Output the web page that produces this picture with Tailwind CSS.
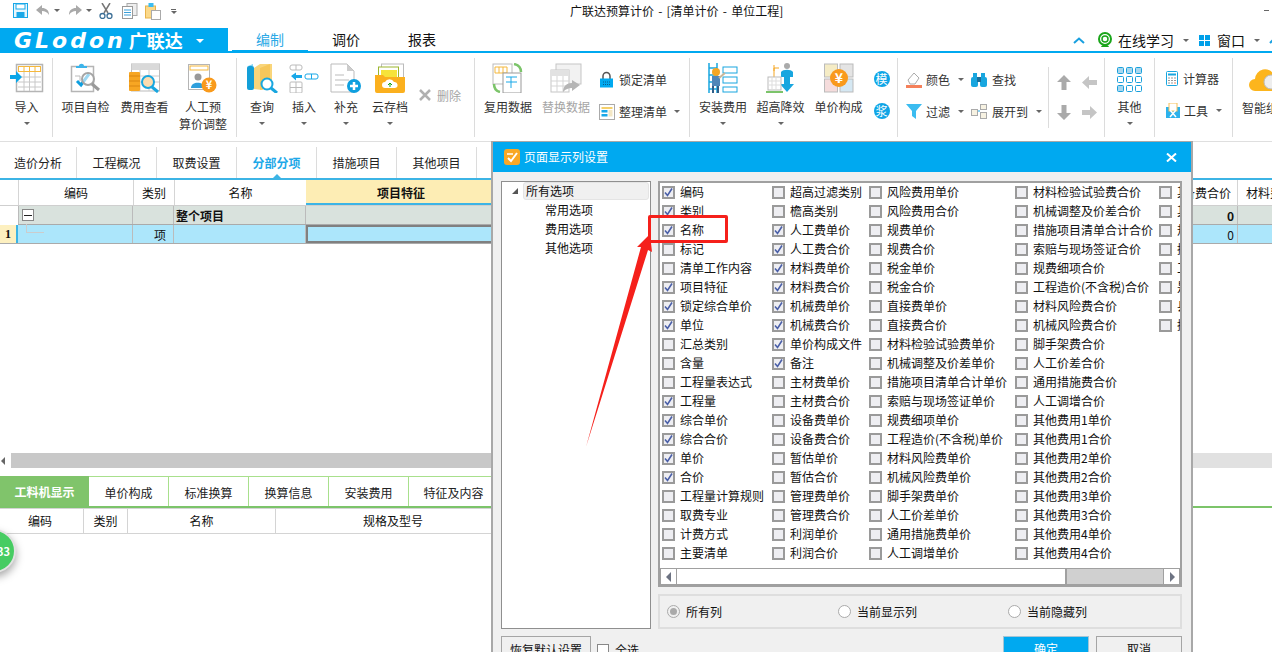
<!DOCTYPE html>
<html lang="zh-CN">
<head>
<meta charset="UTF-8">
<title>广联达预算计价</title>
<script src="https://cdn.jsdelivr.net/npm/@tailwindcss/browser@4"></script>
</head>
<body class="bg-white">
<div class="relative w-[1272px] h-[652px] overflow-hidden bg-white flex flex-col text-[12px] text-[#222] font-['Noto_Sans_CJK_SC','Noto_Sans',sans-serif]">

  <!-- title bar -->
  <div class="h-[28px] flex shrink-0">
    <div class="w-[570px] flex items-start pt-[3px] pl-[13px] gap-[5px]">
      <svg width="15" height="15" viewBox="0 0 15 15"><rect x=".5" y=".5" width="14" height="14" fill="#e6f6fd" stroke="#19a8e8"/><rect x="3" y="1" width="9" height="5" fill="#fff" stroke="#19a8e8"/><rect x="3.5" y="9" width="8" height="5" fill="#19a8e8"/></svg>
      <svg class="ml-[2px]" width="15" height="15" viewBox="0 0 15 15"><path d="M1 7l6-5v3c4 0 7 2 7 7-2-3-4-4-7-4v4z" fill="#a9a9a9"/></svg>
      <div class="mt-[6px] -ml-[1px] w-0 h-0 border-x-[3px] border-t-[3px] border-x-transparent border-t-[#666]"></div>
      <svg class="ml-[3px]" width="15" height="15" viewBox="0 0 15 15"><path d="M14 7L8 2v3C4 5 1 7 1 12c2-3 4-4 7-4v4z" fill="#a9a9a9"/></svg>
      <div class="mt-[6px] -ml-[2px] w-0 h-0 border-x-[3px] border-t-[3px] border-x-transparent border-t-[#666]"></div>
      <svg class="ml-[2px]" width="14" height="16" viewBox="0 0 14 16"><path d="M3 0l6 10M11 0L5 10" stroke="#777" stroke-width="1.5"/><circle cx="3.5" cy="13" r="2.5" fill="none" stroke="#3c6f96" stroke-width="1.3"/><circle cx="10.5" cy="13" r="2.5" fill="none" stroke="#3c6f96" stroke-width="1.3"/></svg>
      <svg class="ml-[4px]" width="16" height="16" viewBox="0 0 16 16"><rect x="5" y=".5" width="10" height="12" fill="#eee" stroke="#aaa"/><rect x=".5" y="3.5" width="10" height="12" fill="#fff" stroke="#999"/><path d="M2 7h7M2 9.500h7M2 12h7" stroke="#3a9fd8"/></svg>
      <svg class="ml-[2px]" width="16" height="17" viewBox="0 0 16 17"><rect x=".5" y="3" width="10" height="12" fill="#fbd98a" stroke="#e8b34b"/><rect x="3.500" y="0" width="5" height="4" fill="#3cbcf0"/><rect x="6.500" y="7.500" width="9" height="9" fill="#fff" stroke="#aaa"/></svg>
      <div class="mt-[6px] ml-[5px] flex flex-col gap-[1px]"><div class="w-[5px] h-[1px] bg-[#666]"></div><div class="w-0 h-0 border-x-[3px] border-t-[3px] border-x-transparent border-t-[#666]"></div></div>
    </div>
    <div class="pt-[2px] leading-[18px] text-[#111] [word-spacing:1.5px]">广联达预算计价 - [清单计价 - 单位工程]</div>
    <div class="ml-auto mr-[3px] mt-[10px] w-[5px] h-[1px] bg-[#666]"></div>
  </div>

  <!-- menu row -->
  <div class="h-[25px] flex shrink-0 border-b-2 border-[#00a9f0]">
    <div class="w-[228px] h-[25px] bg-[#00a9f0] flex items-center pl-[14px] text-white">
      <span class="font-['DejaVu_Sans'] font-bold italic text-[22px] tracking-[3px] leading-[25px]">GLodon</span>
      <span class="ml-[3px] font-bold text-[18px] leading-[25px]">广联达</span>
      <div class="ml-[13px] w-0 h-0 border-x-[4px] border-t-[4px] border-x-transparent border-t-white"></div>
    </div>
    <div class="ml-[4px] w-[76px] h-[25px] text-center text-[14px] leading-[22px] text-[#2ba9e6] border-b-[3px] border-[#00a9f0]">编制</div>
    <div class="w-[76px] text-center text-[14px] leading-[22px] text-[#111]">调价</div>
    <div class="w-[76px] text-center text-[14px] leading-[22px] text-[#111]">报表</div>
    <div class="ml-auto flex items-center h-[23px] pt-[1px] text-[14px] text-[#111]">
      <svg width="12" height="7" viewBox="0 0 12 7"><path d="M1 6l5-4.500L11 6" fill="none" stroke="#19a0e0" stroke-width="2"/></svg>
      <svg class="ml-[12px]" width="16" height="16" viewBox="0 0 16 16"><circle cx="8" cy="7" r="6" fill="none" stroke="#1aa51a" stroke-width="2"/><circle cx="8" cy="7" r="3" fill="none" stroke="#1aa51a" stroke-width="1.500"/><path d="M4 15c1-3 7-3 8 0z" fill="#1aa51a"/></svg>
      <span class="ml-[5px] leading-[18px]">在线学习</span>
      <div class="ml-[9px] w-0 h-0 border-x-[3px] border-t-[3px] border-x-transparent border-t-[#666]"></div>
      <div class="ml-[10px] grid grid-cols-2 gap-[1px]"><div class="w-[5px] h-[5px] bg-[#00a0e9]"></div><div class="w-[5px] h-[5px] bg-[#00a0e9]"></div><div class="w-[5px] h-[5px] bg-[#00a0e9]"></div><div class="w-[5px] h-[5px] bg-[#00a0e9]"></div></div>
      <span class="ml-[7px] leading-[18px]">窗口</span>
      <div class="ml-[9px] w-0 h-0 border-x-[3px] border-t-[3px] border-x-transparent border-t-[#666]"></div>
      <svg class="ml-[9px] mr-[-3px]" width="6" height="8" viewBox="0 0 6 8"><path d="M1 7l5-5" stroke="#19a0e0" stroke-width="2"/></svg>
    </div>
  </div>

  <!-- ribbon -->
  <div class="h-[89px] shrink-0 flex border-b border-[#dfdfdf] pt-[5px] text-[#333] leading-[17px]">

    <div class="w-[53px] h-[79px] border-r border-[#dcdcdc] flex flex-col items-center pt-[5px] pl-[1px]">
      <svg width="34" height="30" viewBox="0 0 34 30"><rect x="6.500" y="1.500" width="26" height="27" fill="#fff" stroke="#b5b5b5" stroke-width="1.500"/><rect x="8.500" y="3.500" width="22" height="5" fill="#fff" stroke="#f5b83d"/><path d="M14 4v4M19.500 4v4M25 4v4" stroke="#f5b83d"/><path d="M8 14h23M8 19h23M8 24h23M14 9v19M19.500 9v19M25 9v19" stroke="#c8c8c8"/><path d="M0 12h6V8l6 6-6 6v-4H0z" fill="#0aa6e8"/></svg>
      <span class="mt-[5px]">导入</span>
      <div class="mt-[7px] w-0 h-0 border-x-[3px] border-t-[3px] border-x-transparent border-t-[#666]"></div>
    </div>

    <div class="w-[184px] h-[79px] border-r border-[#dcdcdc] flex pl-[3px]">
      <div class="w-[59px] flex flex-col items-center pt-[5px]">
        <svg width="32" height="30" viewBox="0 0 32 30"><rect x="1.500" y="3.500" width="22" height="25" fill="#fff" stroke="#b5b5b5" stroke-width="1.500"/><path d="M9 3c0-3 5-3 5 0h3v2H6V3z" fill="#3db4ea"/><path d="M5 13h5v5" fill="none" stroke="#bbb"/><path d="M7 18l4 4 8-11" fill="none" stroke="#0e9fdf" stroke-width="3"/><circle cx="18" cy="16" r="6" fill="#fff" fill-opacity=".6" stroke="#a5a5a5" stroke-width="2"/><path d="M22 21l7 6" stroke="#999" stroke-width="3"/></svg>
        <span class="mt-[5px]">项目自检</span>
      </div>
      <div class="w-[59px] flex flex-col items-center pt-[5px]">
        <svg width="32" height="30" viewBox="0 0 32 30"><rect x="2.500" y="1" width="28" height="27" fill="#fff" stroke="#bbb"/><rect x="2.500" y="1" width="28" height="6" fill="#d9d9d9"/><path d="M3 13h27M3 19h27M11 7v21M20 7v21" stroke="#ccc"/><rect x="0" y="9" width="11" height="19" rx="1" fill="#f7a623"/><path d="M0 13h11M0 18h11M0 23h11" stroke="#d98612"/><circle cx="19" cy="19" r="6" fill="#fbdcb0" stroke="#18a6df" stroke-width="2"/><path d="M23 24l6 5" stroke="#18a6df" stroke-width="3"/></svg>
        <span class="mt-[5px]">费用查看</span>
      </div>
      <div class="w-[58px] flex flex-col items-center pt-[5px]">
        <svg width="30" height="30" viewBox="0 0 30 30"><rect x=".500" y="1.500" width="21" height="25" fill="#fff" stroke="#b5b5b5"/><rect x="2" y="3" width="18" height="4" fill="#fff" stroke="#f5b83d"/><circle cx="10" cy="14" r="3.500" fill="#999"/><path d="M3 25c0-7 13-7 14 0z" fill="#2f9fdc"/><circle cx="21" cy="22" r="7.500" fill="#f99a1c"/><text x="21" y="26" text-anchor="middle" fill="#fff" font-size="11" font-weight="700">¥</text></svg>
        <span class="mt-[5px]">人工预</span>
        <span>算价调整</span>
      </div>
    </div>

    <div class="w-[238px] h-[79px] border-r border-[#dcdcdc] flex pl-[4px]">
      <div class="w-[42px] flex flex-col items-center pt-[5px]">
        <svg width="32" height="30" viewBox="0 0 32 30"><rect x="1" y="3" width="7" height="24" rx="2" fill="#139fd8"/><path d="M2 3l5-2v2z" fill="#7fd0f0"/><path d="M8 5l6-4h12v22l-10 4-8-1z" fill="#f9d57a"/><path d="M14 5l10-4v23l-10 3z" fill="#f6c75b"/><circle cx="21" cy="21" r="5.500" fill="#fff" stroke="#18a6df" stroke-width="2"/><path d="M25 25l6 5" stroke="#18a6df" stroke-width="3"/></svg>
        <span class="mt-[5px]">查询</span>
        <div class="mt-[7px] w-0 h-0 border-x-[3px] border-t-[3px] border-x-transparent border-t-[#666]"></div>
      </div>
      <div class="w-[42px] flex flex-col items-center pt-[5px]">
        <svg width="30" height="30" viewBox="0 0 30 30"><rect x="1" y="2" width="12" height="5" rx="2" fill="#fff" stroke="#bbb"/><path d="M7 2v5" stroke="#bbb"/><path d="M2 13l5-3.500V12h6v3H7v2.500z" fill="#19a8e8"/><rect x="16" y="11" width="13" height="5" rx="2" fill="#fff" stroke="#19a8e8"/><path d="M22.500 11v5" stroke="#19a8e8"/><rect x="1" y="19" width="12" height="11" rx="1" fill="#fff" stroke="#bbb"/><path d="M1 24.500h12M7 19v11" stroke="#bbb"/></svg>
        <span class="mt-[5px]">插入</span>
        <div class="mt-[7px] w-0 h-0 border-x-[3px] border-t-[3px] border-x-transparent border-t-[#666]"></div>
      </div>
      <div class="w-[42px] flex flex-col items-center pt-[5px]">
        <svg width="32" height="30" viewBox="0 0 32 30"><path d="M1 1h16l7 7v21H1z" fill="#fff" stroke="#bbb"/><path d="M17 1v7h7z" fill="#ccc"/><path d="M5 12h9M5 17h14M5 22h9" stroke="#ddd" stroke-width="2"/><circle cx="24" cy="23" r="7" fill="#0e9fdf"/><path d="M24 19v8M20 23h8" stroke="#fff" stroke-width="2.500"/></svg>
        <span class="mt-[5px]">补充</span>
        <div class="mt-[7px] w-0 h-0 border-x-[3px] border-t-[3px] border-x-transparent border-t-[#666]"></div>
      </div>
      <div class="w-[46px] flex flex-col items-center pt-[5px]">
        <svg width="32" height="30" viewBox="0 0 32 30"><rect x="7.500" y="1" width="22" height="16" fill="#fff" stroke="#bbb"/><rect x="4.500" y="4" width="20" height="12" fill="#fff" stroke="#9bb62e"/><rect x="7" y="7" width="16" height="8" fill="#f6e33a"/><path d="M1 12h8l2 2h20v14a2 2 0 0 1-2 2H3a2 2 0 0 1-2-2z" fill="#fbb01e"/><path d="M11 25a3 3 0 0 1 0-6 5 5 0 0 1 9 0 3 3 0 0 1 1 6z" fill="#fff"/><path d="M16 24v-4M14 22l2-2 2 2" fill="none" stroke="#16a016"/></svg>
        <span class="mt-[5px]">云存档</span>
        <div class="mt-[7px] w-0 h-0 border-x-[3px] border-t-[3px] border-x-transparent border-t-[#666]"></div>
      </div>
      <div class="flex-1 flex items-start pl-[6px] pt-[29px] text-[#a5a5a5]">
        <svg class="mt-[2px]" width="12" height="12" viewBox="0 0 12 12"><path d="M1 1l10 10M11 1L1 11" stroke="#b0b0b0" stroke-width="2.500"/></svg>
        <span class="ml-[6px]">删除</span>
      </div>
    </div>

    <div class="w-[215px] h-[79px] border-r border-[#dcdcdc] flex pl-[4px]">
      <div class="w-[58px] flex flex-col items-center pt-[5px]">
        <svg width="32" height="30" viewBox="0 0 32 30"><rect x="1" y="1" width="19" height="20" fill="#fff" stroke="#bbb"/><path d="M3 4h12v6H3zM7 4v6M11 4v6" fill="none" stroke="#f5b83d"/><rect x="11" y="10" width="18" height="20" fill="#fff" stroke="#999"/><path d="M14 14h11M14 19h11M19 14v11" stroke="#19a8e8"/><path d="M22 1c5 1 7 4 7 8" fill="none" stroke="#7cc46a" stroke-width="2.500"/><path d="M2 21c0 4 2 7 6 8" fill="none" stroke="#7cc46a" stroke-width="2.500"/></svg>
        <span class="mt-[5px]">复用数据</span>
      </div>
      <div class="w-[58px] flex flex-col items-center pt-[5px] text-[#a5a5a5]">
        <svg width="32" height="30" viewBox="0 0 32 30"><rect x="6" y="1" width="25" height="20" fill="#f2f2f2" stroke="#c5c5c5"/><rect x="1" y="7" width="18" height="22" fill="#fff" stroke="#c5c5c5"/><rect x="1" y="7" width="18" height="6" fill="#e2e2e2"/><path d="M1 18h18M1 23h18M7 13v16M13 13v16" stroke="#d5d5d5"/><path d="M13 29c0-6 4-9 9-9v-3l8 5-8 6v-3c-4 0-6 1-9 4z" fill="#b5b5b5"/></svg>
        <span class="mt-[5px]">替换数据</span>
      </div>
      <div class="flex-1 flex flex-col pl-[4px] pt-[13px] gap-[15px]">
        <div class="flex items-center h-[17px]">
          <svg width="15" height="17" viewBox="0 0 15 17"><path d="M4 8V5a3.500 3.500 0 0 1 7 0v3" fill="none" stroke="#555" stroke-width="1.500"/><rect x="1" y="7.500" width="13" height="9" fill="#00a9f0"/><path d="M4 11h7M4 13.500h7" stroke="#085f8a" stroke-dasharray="1 1"/></svg>
          <span class="ml-[5px]">锁定清单</span>
        </div>
        <div class="flex items-center h-[17px]">
          <svg width="16" height="16" viewBox="0 0 16 16"><rect x=".5" y=".5" width="15" height="15" fill="#fff" stroke="#aaa"/><rect x="2.500" y="3" width="11" height="2" fill="#f5d06a"/><rect x="2.500" y="6" width="6" height="2.500" fill="#19a8e8"/><rect x="2.500" y="10" width="6" height="2.500" fill="#19a8e8"/><rect x="9.500" y="6" width="4" height="6.500" fill="#f3e7c5"/></svg>
          <span class="ml-[4px]">整理清单</span>
          <div class="ml-[7px] w-0 h-0 border-x-[3px] border-t-[3px] border-x-transparent border-t-[#666]"></div>
        </div>
      </div>
    </div>

    <div class="w-[208px] h-[79px] border-r border-[#dcdcdc] flex pl-[4px]">
      <div class="w-[58px] flex flex-col items-center pt-[5px]">
        <svg width="30" height="30" viewBox="0 0 30 30"><path d="M1 0v30M9 0v30M1 5h8M1 12h8M1 19h8M1 26h8" stroke="#18a6df" stroke-width="1.500"/><rect x="15" y="4" width="14" height="6" fill="#fff" stroke="#18a6df"/><rect x="15" y="14" width="14" height="6" fill="#fff" stroke="#18a6df"/><rect x="15" y="24" width="14" height="5" fill="#fff" stroke="#18a6df"/><circle cx="8" cy="9" r="4" fill="#f5a623"/><rect x="4" y="13" width="8" height="10" fill="#4f86b8"/><path d="M5 23v7M10 23v7" stroke="#2f5f8a" stroke-width="2"/><path d="M11 15l6-5" stroke="#c9b79a" stroke-width="2"/></svg>
        <span class="mt-[5px]">安装费用</span>
        <div class="mt-[7px] w-0 h-0 border-x-[3px] border-t-[3px] border-x-transparent border-t-[#666]"></div>
      </div>
      <div class="w-[57px] flex flex-col items-center pt-[5px]">
        <svg width="30" height="30" viewBox="0 0 30 30"><circle cx="21" cy="3" r="3" fill="#aaa"/><path d="M15 9c2-3 10-3 12 0v5H15z" fill="#18a6df"/><path d="M18 14h6v7h4l-7 8-7-8h4z" fill="#18a6df"/><path d="M8 5h5M8 2v6M8 5v22" fill="none" stroke="#f5a623"/><rect x="2" y="14" width="13" height="13" fill="#fff" stroke="#bbb"/><path d="M2 18h13M2 22h13M6 14v13M10 14v13" stroke="#ddd"/><path d="M0 29h17" stroke="#7cc46a" stroke-width="2"/></svg>
        <span class="mt-[5px]">超高降效</span>
        <div class="mt-[7px] w-0 h-0 border-x-[3px] border-t-[3px] border-x-transparent border-t-[#666]"></div>
      </div>
      <div class="w-[59px] flex flex-col items-center pt-[5px]">
        <svg width="30" height="30" viewBox="0 0 30 30"><rect x=".5" y="1" width="13" height="13" fill="#f5ecc5" stroke="#bbb"/><rect x="16" y="1" width="13" height="13" fill="#e4e4e4" stroke="#bbb"/><rect x=".5" y="16" width="13" height="13" fill="#f5dcdc" stroke="#bbb"/><rect x="16" y="16" width="13" height="13" fill="#d5e8f3" stroke="#bbb"/><circle cx="15" cy="15" r="9" fill="#f99a1c"/><text x="15" y="20" text-anchor="middle" fill="#fff" font-size="14" font-weight="700">¥</text></svg>
        <span class="mt-[5px]">单价构成</span>
      </div>
      <div class="flex-1 flex flex-col items-center pt-[13px] pr-[2px] gap-[16px]">
        <div class="w-[16px] h-[16px] rounded-full bg-[#0fa5e6] text-white text-[12px] leading-[16px] text-center">模</div>
        <div class="w-[16px] h-[16px] rounded-full bg-[#0fa5e6] text-white text-[12px] leading-[16px] text-center">浆</div>
      </div>
    </div>

    <div class="w-[207px] h-[79px] border-r border-[#dcdcdc] flex">
      <div class="w-[150px] flex flex-col pl-[8px] pt-[13px] gap-[15px] relative">
        <div class="flex items-center h-[17px]">
          <svg width="16" height="16" viewBox="0 0 16 16"><path d="M2 8l6-7 5 5-4 6H4z" fill="#fff" stroke="#aaa"/><rect x="0" y="13" width="16" height="3" fill="#f5805a"/></svg>
          <span class="ml-[4px]">颜色</span>
          <div class="ml-[8px] w-0 h-0 border-x-[3px] border-t-[3px] border-x-transparent border-t-[#666]"></div>
          <svg class="ml-[7px]" width="16" height="15" viewBox="0 0 16 15"><rect x="0" y="5" width="7" height="10" rx="2" fill="#18a6df"/><rect x="9" y="5" width="7" height="10" rx="2" fill="#18a6df"/><rect x="2" y="1" width="4" height="5" fill="#18a6df"/><rect x="10" y="1" width="4" height="5" fill="#18a6df"/><rect x="6" y="5" width="4" height="5" fill="#1a6f9b"/></svg>
          <span class="ml-[5px]">查找</span>
        </div>
        <div class="flex items-center h-[17px]">
          <svg width="16" height="15" viewBox="0 0 16 15"><path d="M0 0h16L10 7v8L6 12V7z" fill="#3bbcf0"/></svg>
          <span class="ml-[4px]">过滤</span>
          <div class="ml-[8px] w-0 h-0 border-x-[3px] border-t-[3px] border-x-transparent border-t-[#666]"></div>
          <svg class="ml-[7px]" width="16" height="15" viewBox="0 0 16 15"><rect x=".5" y="5.500" width="6" height="6" fill="#f7f2e2" stroke="#aaa"/><rect x="9.500" y=".5" width="6" height="5" fill="#f7f2e2" stroke="#aaa"/><rect x="9.500" y="8.500" width="6" height="6" fill="#f7f2e2" stroke="#aaa"/><path d="M7 7h2" stroke="#19a8e8"/></svg>
          <span class="ml-[5px]">展开到</span>
          <div class="ml-[8px] w-0 h-0 border-x-[3px] border-t-[3px] border-x-transparent border-t-[#666]"></div>
        </div>
      </div>
      <div class="w-[56px] h-[61px] mt-[9px] border-l border-[#dcdcdc] grid grid-cols-2 place-items-center px-[2px]">
        <svg width="14" height="15" viewBox="0 0 14 15"><path d="M7 0l7 7H9.500v8h-5V7H0z" fill="#aaa"/></svg>
        <svg width="15" height="13" viewBox="0 0 15 13"><path d="M0 6.500l7-6.500v4h8v5H7v4z" fill="#c5c5c5"/></svg>
        <svg width="14" height="15" viewBox="0 0 14 15"><path d="M7 15l7-7H9.500V0h-5v8H0z" fill="#aaa"/></svg>
        <svg width="15" height="13" viewBox="0 0 15 13"><path d="M15 6.500L8 0v4H0v5h8v4z" fill="#c5c5c5"/></svg>
      </div>
    </div>

    <div class="w-[50px] h-[79px] border-r border-[#dcdcdc] flex flex-col items-center pt-[9px]">
      <svg width="26" height="26" viewBox="0 0 26 26"><rect x=".5" y=".5" width="6" height="6" rx="1" fill="#a8d8ef" stroke="#18a0dc"/><rect x="9.500" y=".5" width="6" height="6" rx="1" fill="#a8d8ef" stroke="#18a0dc"/><rect x="18.500" y=".5" width="6" height="6" rx="1" fill="#a8d8ef" stroke="#18a0dc"/><rect x=".5" y="9.500" width="6" height="6" rx="1" fill="#fff" stroke="#18a0dc"/><rect x="9.500" y="9.500" width="6" height="6" rx="1" fill="#fff" stroke="#18a0dc"/><rect x="18.500" y="9.500" width="6" height="6" rx="1" fill="#fff" stroke="#18a0dc"/><rect x=".5" y="18.500" width="6" height="6" rx="1" fill="#a8d8ef" stroke="#18a0dc"/><rect x="9.500" y="18.500" width="6" height="6" rx="1" fill="#fff" stroke="#18a0dc"/><rect x="18.500" y="18.500" width="6" height="6" rx="1" fill="#fff" stroke="#18a0dc"/></svg>
      <span class="mt-[5px]">其他</span>
      <div class="mt-[7px] w-0 h-0 border-x-[3px] border-t-[3px] border-x-transparent border-t-[#666]"></div>
    </div>

    <div class="w-[78px] h-[79px] border-r border-[#dcdcdc] flex flex-col pl-[11px] pt-[12px] gap-[15px]">
      <div class="flex items-center h-[17px]">
        <svg width="12" height="15" viewBox="0 0 12 15"><rect x=".5" y=".5" width="11" height="14" rx="1" fill="#fff" stroke="#18a6df"/><rect x="2" y="2.500" width="8" height="2" fill="#18a6df"/><path d="M2 7h2M5 7h2M8 7h2M2 9.500h2M5 9.500h2M8 9.500h2M2 12h2M5 12h2" stroke="#999"/><path d="M8 12h2" stroke="#f5805a"/></svg>
        <span class="ml-[5px]">计算器</span>
      </div>
      <div class="flex items-center h-[17px]">
        <svg width="14" height="15" viewBox="0 0 14 15"><rect x="0" y="4" width="14" height="11" fill="#2cb2ec"/><rect x="3" y="0" width="8" height="8" fill="#fff" stroke="#f5c05a"/><path d="M4 7l6 7M10 7l-6 7" stroke="#fff" stroke-width="1.500"/></svg>
        <span class="ml-[4px]">工具</span>
        <div class="ml-[8px] w-0 h-0 border-x-[3px] border-t-[3px] border-x-transparent border-t-[#666]"></div>
      </div>
    </div>

    <div class="flex-1 flex flex-col pl-[9px] pt-[9px] overflow-hidden whitespace-nowrap">
      <svg class="ml-[7px]" width="34" height="26" viewBox="0 0 34 26"><path d="M6 24a6 6 0 0 1 0-12 10 10 0 0 1 19-4 8 8 0 0 1 3 16z" fill="#fcb51d"/><circle cx="22" cy="15" r="7" fill="#eee" stroke="#bbb"/></svg>
      <span class="mt-[6px]">智能组价</span>
    </div>
  </div>

  <!-- page tabs -->
  <div class="h-[38px] shrink-0 pt-[5px] flex border-b-2 border-[#3cb4e5]">
    <div class="w-[77px] h-[31px] border-r border-[#dcdcdc] text-center leading-[31px]">造价分析</div>
    <div class="w-[80px] h-[31px] border-r border-[#dcdcdc] text-center leading-[31px]">工程概况</div>
    <div class="w-[80px] h-[31px] border-r border-[#dcdcdc] text-center leading-[31px]">取费设置</div>
    <div class="relative w-[80px] h-[31px] border-r border-[#dcdcdc] text-center leading-[31px] font-bold text-[#1ea8e8]">分部分项<div class="absolute left-[36px] bottom-0 w-0 h-0 border-x-[4px] border-b-[4px] border-x-transparent border-b-[#3cb4e5]"></div></div>
    <div class="w-[80px] h-[31px] border-r border-[#dcdcdc] text-center leading-[31px]">措施项目</div>
    <div class="w-[80px] h-[31px] border-r border-[#dcdcdc] text-center leading-[31px]">其他项目</div>
  </div>

  <!-- main grid -->
  <div class="h-[273px] shrink-0 text-[#111]">
    <div class="flex h-[26px] border-b border-[#cfcfcf]">
      <div class="w-[18px]"></div>
      <div class="w-[115px] border-l border-[#d5d5d5] text-center leading-[26px]">编码</div>
      <div class="w-[41px] border-l border-[#d5d5d5] text-center leading-[26px]">类别</div>
      <div class="w-[132px] border-l border-[#d5d5d5] text-center leading-[26px]">名称</div>
      <div class="w-[190px] bg-[#fdedb4] border-b-2 border-[#3cb4e5] text-center font-bold leading-[26px]">项目特征</div>
      <div class="w-[669px]"></div>
      <div class="w-[73px] border-r border-[#d5d5d5] text-center leading-[26px]">设备费合价</div>
      <div class="flex-1 pl-[8px] overflow-hidden whitespace-nowrap leading-[26px]">材料费单价</div>
    </div>
    <div class="flex h-[19px] bg-[#d9e2dd] border-b border-[#aaa] ml-[18px]">
      <div class="w-[115px] border-x border-[#bbb] pl-[3px] pt-[3px]"><div class="w-[12px] h-[12px] bg-white border border-[#888] flex items-center justify-center"><div class="w-[8px] h-[1px] bg-[#222]"></div></div></div>
      <div class="w-[41px] border-r border-[#bbb]"></div>
      <div class="w-[132px] border-r border-[#bbb] pl-[2px] font-bold leading-[20px]">整个项目</div>
      <div class="w-[859px]"></div>
      <div class="w-[73px] border-r border-[#bbb] text-right pr-[3px] font-bold leading-[20px]">0</div>
    </div>
    <div class="flex h-[19px] bg-[#ace6fb] border-b border-[#aaa]">
      <div class="w-[18px] bg-[#fdf0c0] border-r-2 border-[#3cb4e5] font-bold text-center leading-[19px] font-['Liberation_Serif']">1</div>
      <div class="w-[115px] border-r border-[#bbb] relative"><div class="absolute left-[8px] top-[-1px] w-[18px] h-[9px] border-l border-b border-[#ccc]"></div></div>
      <div class="w-[41px] border-r border-[#bbb] text-right pr-[7px] leading-[20px]">项</div>
      <div class="w-[132px] border-r border-[#bbb]"></div>
      <div class="w-[190px] border-2 border-[#808080]"></div>
      <div class="w-[669px]"></div>
      <div class="w-[73px] border-r border-[#bbb] text-right pr-[3px] leading-[20px]">0</div>
    </div>
  </div>

  <!-- grid scrollbar -->
  <div class="h-[15px] shrink-0 flex">
    <div class="w-[11px] bg-white flex items-center pl-[1px]"><div class="w-0 h-0 border-y-[4px] border-r-[4px] border-y-transparent border-r-[#666]"></div></div>
    <div class="w-[600px] bg-[#c8c8c8]"></div>
    <div class="flex-1 bg-[#e1e1e1]"></div>
  </div>

  <!-- detail tabs -->
  <div class="mt-[8px] h-[32px] shrink-0 flex border-b-2 border-[#7cc46a] text-[#222]">
    <div class="w-[89px] h-[30px] bg-[#80c46b] text-white font-bold text-center leading-[32px]">工料机显示</div>
    <div class="w-[80px] h-[30px] border-t border-r border-[#a8e08c] text-center leading-[31px]">单价构成</div>
    <div class="w-[80px] h-[30px] border-t border-r border-[#a8e08c] text-center leading-[31px]">标准换算</div>
    <div class="w-[80px] h-[30px] border-t border-r border-[#a8e08c] text-center leading-[31px]">换算信息</div>
    <div class="w-[80px] h-[30px] border-t border-r border-[#a8e08c] text-center leading-[31px]">安装费用</div>
    <div class="w-[83px] h-[30px] border-t border-[#a8e08c] text-center leading-[31px] pl-[6px]">特征及内容</div>
  </div>

  <!-- detail grid -->
  <div class="h-[26px] shrink-0 w-[492px] flex border-y border-[#d4d4d4] text-[#111]">
    <div class="w-[84px] border-r border-[#d4d4d4] text-center leading-[24px] pr-[3px]">编码</div>
    <div class="w-[44px] border-r border-[#d4d4d4] text-center leading-[24px]">类别</div>
    <div class="w-[148px] border-r border-[#d4d4d4] text-center leading-[24px]">名称</div>
    <div class="flex-1 text-center leading-[24px] pl-[18px]">规格及型号</div>
  </div>

  <!-- floating badge -->
  <div class="absolute left-[-28px] top-[529px] w-[44px] h-[44px] rounded-full bg-[#46cc62] border-2 border-[#e2e2e2] shadow-[0_4px_8px_rgba(0,0,0,0.35)] text-white font-bold text-[11px] leading-[40px] text-right pr-[4px]">33</div>

  <!-- dialog -->
  <div class="absolute left-[491px] top-[141px] w-[702px] h-[520px] bg-[#f0f0f0] border-x-2 border-t border-[#a8a8a8] flex flex-col text-[#111]">
    <div class="h-[30px] shrink-0 bg-[#00a9f0] flex items-center pl-[11px] pr-[14px] text-white text-[12px]">
      <svg width="16" height="16" viewBox="0 0 16 16"><rect width="16" height="16" rx="3" fill="#f9a825"/><path d="M4 9l3 3 6-8" fill="none" stroke="#fff" stroke-width="2"/><path d="M3 5h6" stroke="#fff" stroke-width="1.500"/></svg>
      <span class="ml-[4px]">页面显示列设置</span>
      <svg class="ml-auto" width="11" height="9" viewBox="0 0 11 9"><path d="M1 .5l9 8M10 .5l-9 8" stroke="#fff" stroke-width="2"/></svg>
    </div>
    <div class="flex-1 flex pt-[9px] pl-[8px] gap-[7px]">
      <div class="w-[150px] h-[448px] bg-white border border-[#8f8f8f] pl-[10px]">
        <div class="flex items-center h-[18px]">
          <div class="w-[6px] h-[6px] bg-[#555] [clip-path:polygon(100%_0,100%_100%,0_100%)]"></div>
          <div class="ml-[5px] w-[126px] h-[18px] bg-[#f0f0f0] rounded-[3px] border border-[#e4e4e4] pl-[2px] leading-[16px]">所有选项</div>
        </div>
        <div class="pl-[33px] leading-[19px]">
          <div>常用选项</div>
          <div>费用选项</div>
          <div>其他选项</div>
        </div>
      </div>
      <div class="w-[524px] flex flex-col gap-[7px]">
        <div class="h-[406px] bg-white border-2 border-[#a0a0a0] flex flex-col overflow-hidden">
          <div id="columnList" class="h-[386px] flex pl-[2px] overflow-hidden whitespace-nowrap"></div>
          <div class="h-[17px] flex border border-[#a0a0a0]">
            <div class="w-[16px] border-r border-[#a0a0a0] flex items-center pl-[5px]"><div class="w-0 h-0 border-y-[5px] border-r-[5px] border-y-transparent border-r-[#6d7382]"></div></div>
            <div class="w-[390px] border-r-2 border-[#a0a0a0]"></div>
            <div class="flex-1 bg-[#d0d0d0]"></div>
            <div class="w-[16px] border-l border-[#a0a0a0] flex items-center pl-[6px]"><div class="w-0 h-0 border-y-[5px] border-l-[5px] border-y-transparent border-l-[#6d7382]"></div></div>
          </div>
        </div>
        <div class="h-[35px] border-2 border-[#dedede] flex items-center pl-[7px]">
          <div class="w-[13px] h-[13px] rounded-full border border-[#aaa] flex items-center justify-center"><div class="w-[7px] h-[7px] rounded-full bg-[#aaa]"></div></div>
          <span class="ml-[6px] w-[152px]">所有列</span>
          <div class="w-[13px] h-[13px] rounded-full border border-[#aaa] bg-white"></div>
          <span class="ml-[6px] w-[151px]">当前显示列</span>
          <div class="w-[13px] h-[13px] rounded-full border border-[#aaa] bg-white"></div>
          <span class="ml-[6px]">当前隐藏列</span>
        </div>
      </div>
    </div>
    <div class="h-[32px] shrink-0"></div>
  </div>

  <!-- dialog buttons -->
  <div class="absolute left-[501px] top-[636px] w-[90px] h-[24px] bg-[#f0f0f0] border border-[#a5a5a5] text-center leading-[25px] text-[#111]">恢复默认设置</div>
  <div class="absolute left-[597px] top-[641px] flex items-center text-[#111]">
    <div class="w-[12px] h-[12px] bg-white border border-[#888]"></div>
    <span class="ml-[6px]">全选</span>
  </div>
  <div class="absolute left-[1003px] top-[636px] w-[86px] h-[24px] bg-[#00a9f0] border border-[#a5c5d5] text-white text-center leading-[23px]">确定</div>
  <div class="absolute left-[1096px] top-[636px] w-[86px] h-[24px] bg-[#f0f0f0] border border-[#a5a5a5] text-center leading-[23px] text-[#111]">取消</div>

  <!-- red annotation -->
  <div class="absolute left-[648px] top-[215px] w-[80px] h-[28px] border-[3px] border-[#f5201b] rounded-[2px]"></div>
  <svg class="absolute left-[580px] top-[232px]" width="80" height="220" viewBox="0 0 80 220"><polygon points="6,215 61,15 57,15 70,2 72,20 68,18" fill="#f5201b"/></svg>
</div>

<script>
// columns of the settings dialog: [label, checked]
const checkedCols = ["编码", "类别", "名称", "项目特征", "锁定综合单价", "单位", "工程量", "综合单价", "综合合价", "单价", "合价",
  "人工费单价", "人工费合价", "材料费单价", "材料费合价", "机械费单价", "机械费合价", "单价构成文件", "备注"];

const columns = [
  { width: 110, items: ["编码", "类别", "名称", "标记", "清单工作内容", "项目特征", "锁定综合单价", "单位", "汇总类别", "含量", "工程量表达式", "工程量", "综合单价", "综合合价", "单价", "合价", "工程量计算规则", "取费专业", "计费方式", "主要清单"] },
  { width: 97, items: ["超高过滤类别", "檐高类别", "人工费单价", "人工费合价", "材料费单价", "材料费合价", "机械费单价", "机械费合价", "单价构成文件", "备注", "主材费单价", "主材费合价", "设备费单价", "设备费合价", "暂估单价", "暂估合价", "管理费单价", "管理费合价", "利润单价", "利润合价"] },
  { width: 146, items: ["风险费用单价", "风险费用合价", "规费单价", "规费合价", "税金单价", "税金合价", "直接费单价", "直接费合价", "材料检验试验费单价", "机械调整及价差单价", "措施项目清单合计单价", "索赔与现场签证单价", "规费细项单价", "工程造价(不含税)单价", "材料风险费单价", "机械风险费单价", "脚手架费单价", "人工价差单价", "通用措施费单价", "人工调增单价"] },
  { width: 144, items: ["材料检验试验费合价", "机械调整及价差合价", "措施项目清单合计合价", "索赔与现场签证合价", "规费细项合价", "工程造价(不含税)合价", "材料风险费合价", "机械风险费合价", "脚手架费合价", "人工价差合价", "通用措施费合价", "人工调增合价", "其他费用1单价", "其他费用1合价", "其他费用2单价", "其他费用2合价", "其他费用3单价", "其他费用3合价", "其他费用4单价", "其他费用4合价"] },
  { width: 40, items: ["其他费用5单价", "其他费用5合价", "规费", "控制价", "工程", "是否", "县", "控制"] }
];

const tick = `<svg width="9" height="9" viewBox="0 0 9 9"><path d="M1 4.500l2.500 3L8 .5" fill="none" stroke="#4a5fa8" stroke-width="1.600"/></svg>`;

const list = document.getElementById("columnList");
columns.forEach(col => {
  const colDiv = document.createElement("div");
  colDiv.style.width = col.width + "px";
  colDiv.className = "shrink-0";
  col.items.forEach(name => {
    const on = checkedCols.includes(name);
    const row = document.createElement("div");
    row.className = "h-[19px] flex items-center";
    row.innerHTML = `<div class="w-[13px] h-[13px] shrink-0 border-2 border-[#9a9a9a] bg-[#eeeef2] flex items-center justify-center">${on ? tick : ""}</div><span class="ml-[5px] -translate-y-[1px]">${name}</span>`;
    colDiv.appendChild(row);
  });
  list.appendChild(colDiv);
});
</script>
</body>
</html>
